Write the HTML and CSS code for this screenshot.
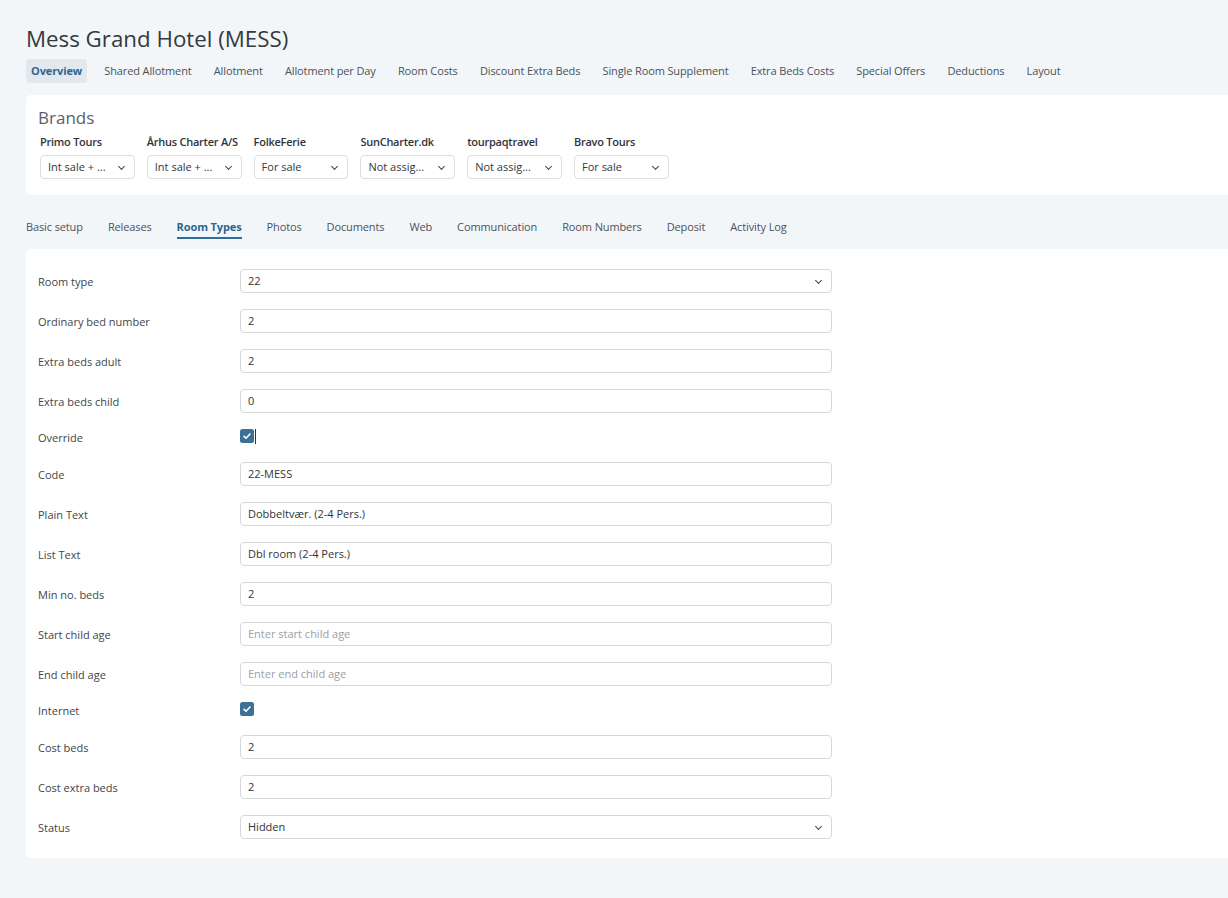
FILE: index.html
```html
<!DOCTYPE html>
<html>
<head>
<meta charset="utf-8">
<link rel="stylesheet" href="styles.css">
</head>
<body>
<div class="page">
  <h1 class="title">Mess Grand Hotel (MESS)</h1>
  <nav class="topnav">
    <a class="active">Overview</a>
    <a>Shared Allotment</a>
    <a>Allotment</a>
    <a>Allotment per Day</a>
    <a>Room Costs</a>
    <a>Discount Extra Beds</a>
    <a>Single Room Supplement</a>
    <a>Extra Beds Costs</a>
    <a>Special Offers</a>
    <a>Deductions</a>
    <a>Layout</a>
  </nav>
  <section class="card brands">
    <h2>Brands</h2>
    <div class="brand-list">
      <div class="brand"><div class="brand-name">Primo Tours</div><div class="sel small">Int sale + ...<span class="chev"></span></div></div>
      <div class="brand"><div class="brand-name">Århus Charter A/S</div><div class="sel small">Int sale + ...<span class="chev"></span></div></div>
      <div class="brand"><div class="brand-name">FolkeFerie</div><div class="sel small">For sale<span class="chev"></span></div></div>
      <div class="brand"><div class="brand-name">SunCharter.dk</div><div class="sel small">Not assig...<span class="chev"></span></div></div>
      <div class="brand"><div class="brand-name">tourpaqtravel</div><div class="sel small">Not assig...<span class="chev"></span></div></div>
      <div class="brand"><div class="brand-name">Bravo Tours</div><div class="sel small">For sale<span class="chev"></span></div></div>
    </div>
  </section>
  <nav class="tabs">
    <a>Basic setup</a>
    <a>Releases</a>
    <a class="active">Room Types</a>
    <a>Photos</a>
    <a>Documents</a>
    <a>Web</a>
    <a>Communication</a>
    <a>Room Numbers</a>
    <a>Deposit</a>
    <a>Activity Log</a>
  </nav>
  <section class="card form">
    <div class="row"><label>Room type</label><div class="sel field">22<span class="chev"></span></div></div>
    <div class="row"><label>Ordinary bed number</label><div class="field">2</div></div>
    <div class="row"><label>Extra beds adult</label><div class="field">2</div></div>
    <div class="row"><label>Extra beds child</label><div class="field">0</div></div>
    <div class="row check"><label>Override</label><span class="cb"><svg viewBox="0 0 14 14" width="14" height="14"><rect width="14" height="14" rx="2.5" fill="#3c7094"/><path d="M4 7.3l2 1.9 4-4.2" fill="none" stroke="#fff" stroke-width="1.6" stroke-linecap="round" stroke-linejoin="round"/></svg></span><span class="caret"></span></div>
    <div class="row"><label>Code</label><div class="field">22-MESS</div></div>
    <div class="row"><label>Plain Text</label><div class="field">Dobbeltvær. (2-4 Pers.)</div></div>
    <div class="row"><label>List Text</label><div class="field">Dbl room (2-4 Pers.)</div></div>
    <div class="row"><label>Min no. beds</label><div class="field">2</div></div>
    <div class="row"><label>Start child age</label><div class="field ph">Enter start child age</div></div>
    <div class="row"><label>End child age</label><div class="field ph">Enter end child age</div></div>
    <div class="row check"><label>Internet</label><span class="cb"><svg viewBox="0 0 14 14" width="14" height="14"><rect width="14" height="14" rx="2.5" fill="#3c7094"/><path d="M4 7.3l2 1.9 4-4.2" fill="none" stroke="#fff" stroke-width="1.6" stroke-linecap="round" stroke-linejoin="round"/></svg></span></div>
    <div class="row"><label>Cost beds</label><div class="field">2</div></div>
    <div class="row"><label>Cost extra beds</label><div class="field">2</div></div>
    <div class="row"><label>Status</label><div class="sel field">Hidden<span class="chev"></span></div></div>
  </section>
</div>
</body>
</html>
```
FILE: styles.css
```css
html, body {
  margin: 0;
  padding: 0;
  background: #f3f6f9;
  font-family: "Open Sans", "Noto Sans", sans-serif;
  color: #3b3f45;
}
.page {
  padding: 24px 0 40px 26px;
}
.title {
  margin: 0;
  font-size: 22.3px;
  font-weight: 400;
  color: #343a40;
  line-height: 30px;
}
.topnav {
  display: flex;
  margin-top: 5px;
}
.topnav a {
  font-size: 11px;
  letter-spacing: -0.12px;
  padding: 0 5px;
  height: 24px;
  line-height: 24px;
  color: #4b5259;
  margin-right: 12.2px;
  border-radius: 4px;
}
.topnav a.active {
  background: #e1e8ee;
  color: #2c6690;
  font-weight: 700;
}
.card {
  background: #fff;
  border-radius: 5px 0 0 5px;
}
.brands {
  margin-top: 12px;
  padding: 12px 12px 16px 12px;
}
.brands h2 {
  margin: 0;
  font-size: 17px;
  font-weight: 400;
  color: #5a6168;
  line-height: 22px;
}
.brand-list {
  display: flex;
  gap: 12px;
  margin-top: 4px;
  padding-left: 2px;
}
.brand-name {
  font-size: 11px;
  font-weight: 600;
  letter-spacing: -0.25px;
  color: #2f343a;
  line-height: 15px;
  margin-top: 1px;
}
.sel {
  position: relative;
}
.small {
  width: 94.8px;
  height: 24px;
  box-sizing: border-box;
  border: 1px solid #dadde1;
  border-radius: 4px;
  margin-top: 6px;
  font-size: 11px;
  line-height: 22px;
  padding-left: 7px;
  color: #33383d;
}
.chev {
  position: absolute;
  right: 10px;
  top: 8px;
  width: 4px;
  height: 4px;
  border-right: 1.3px solid #444;
  border-bottom: 1.3px solid #444;
  transform: rotate(45deg);
}
.tabs {
  display: flex;
  margin-top: 20px;
  height: 34px;
}
.tabs a {
  font-size: 11px;
  letter-spacing: -0.12px;
  color: #4b5259;
  margin-right: 25px;
  line-height: 24px;
  height: 22px;
}
.tabs a.active {
  font-weight: 700;
  color: #2c6690;
  border-bottom: 2px solid #2c6f9a;
}
.form {
  padding: 20px 0 19px 12px;
}
.row {
  display: flex;
  align-items: center;
  height: 24px;
  margin-bottom: 16px;
}
.row:last-child {
  margin-bottom: 0;
}
.row label {
  width: 202px;
  font-size: 11px;
  color: #40464c;
}
.field {
  width: 592px;
  height: 24px;
  box-sizing: border-box;
  border: 1px solid #d4d8dc;
  border-radius: 4px;
  font-size: 11px;
  line-height: 22px;
  padding-left: 7px;
  color: #2f343a;
}
.field.ph {
  color: #9aa0a6;
}
.row.check {
  height: 17px;
  align-items: flex-start;
}
.row.check label {
  line-height: 17px;
}
.cb {
  display: block;
  width: 14px;
  height: 14px;
}
.cb svg { display: block; }
.caret {
  width: 1px;
  height: 15px;
  background: #2e3338;
  margin-left: 1px;
}
```
